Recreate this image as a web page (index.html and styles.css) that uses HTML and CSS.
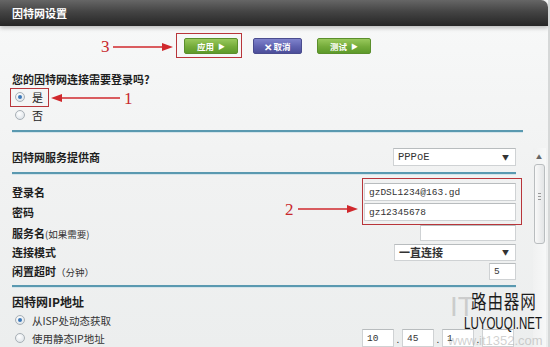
FILE: index.html
```html
<!DOCTYPE html>
<html lang="zh-CN">
<head>
<meta charset="utf-8">
<link rel="stylesheet" href="styles.css">
</head>
<body>
<div class="window">
  <div class="titlebar">因特网设置</div>
  <div class="toolbar">
    <span class="btn green">应用 <span class="tri">▶</span></span>
    <span class="btn purple"><span class="x">✕</span>取消</span>
    <span class="btn green">测试 <span class="tri">▶</span></span>
  </div>
  <div class="form">
    <div class="question">您的因特网连接需要登录吗?</div>
    <div class="radio-row"><span class="radio checked"></span>是</div>
    <div class="radio-row"><span class="radio"></span>否</div>
    <div class="divider wide"></div>
    <div class="panel">
      <div class="panel-body">
        <div class="row isp">
          <span class="label">因特网服务提供商</span>
          <span class="select w-isp"><span class="val mono">PPPoE</span><span class="arrow">▼</span></span>
        </div>
        <div class="divider"></div>
        <div class="row r-login">
          <span class="label">登录名</span>
          <span class="input w-login mono">gzDSL1234@163.gd</span>
        </div>
        <div class="row r-pass">
          <span class="label">密码</span>
          <span class="input w-login mono">gz12345678</span>
        </div>
        <div class="row r-svc">
          <span class="label">服务名<span class="note">(如果需要)</span></span>
          <span class="input w-svc mono"></span>
        </div>
        <div class="row r-mode">
          <span class="label">连接模式</span>
          <span class="select w-mode"><span class="val cjk">一直连接</span><span class="arrow">▼</span></span>
        </div>
        <div class="row r-idle">
          <span class="label">闲置超时<span class="note">（分钟）</span></span>
          <span class="input w-idle mono">5</span>
        </div>
        <div class="divider d3"></div>
        <div class="ip-title">因特网IP地址</div>
        <div class="radio-row sub"><span class="radio checked"></span>从ISP处动态获取</div>
        <div class="row r-static">
          <span class="radio-row sub inline"><span class="radio"></span>使用静态IP地址</span>
          <span class="ip">
            <span class="input w-ip mono">10</span><span class="dot">.</span>
            <span class="input w-ip mono">45</span><span class="dot">.</span>
            <span class="input w-ip mono">1</span><span class="dot">.</span>
            <span class="input w-ip mono"></span>
          </span>
        </div>
      </div>
      <div class="scrollbar">
        <span class="up">▲</span>
        <span class="thumb"><span class="grip"></span></span>
      </div>
    </div>
  </div>

  <div class="mark box3"></div>
  <div class="mark box1"></div>
  <div class="mark box2"></div>
  <span class="num n3">3</span>
  <span class="num n1">1</span>
  <span class="num n2">2</span>
  <svg class="arrows" width="550" height="347" viewBox="0 0 550 347">
    <line x1="113" y1="47" x2="164" y2="47" stroke="#d0282c" stroke-width="1.5"/>
    <polygon points="162,43 173,47 162,51" fill="#d0282c"/>
    <line x1="60" y1="98" x2="120" y2="98" stroke="#d0282c" stroke-width="1.5"/>
    <polygon points="62,94 51,98 62,102" fill="#d0282c"/>
    <line x1="298" y1="209" x2="349" y2="209" stroke="#d0282c" stroke-width="1.5"/>
    <polygon points="347,205 358,209 347,213" fill="#d0282c"/>
  </svg>

  <div class="wm-grey">IT</div>
  <div class="wm-www">www.it1352.com</div>
  <div class="wm-cn">路由器网</div>
  <div class="wm-en">LUYOUQI.NET</div>
</div>
</body>
</html>
```

FILE: styles.css
```css
html, body {
  margin: 0;
  padding: 0;
  background: #ffffff;
}
body {
  width: 550px;
  height: 347px;
  overflow: hidden;
  font-family: "Noto Sans CJK SC", "Liberation Sans", sans-serif;
  color: #1e1e1e;
}
.window {
  position: relative;
  width: 548px;
  height: 347px;
  background: linear-gradient(#f8f9f9, #f1f2f2 50%, #eceeee);
  border-right: 2px solid #d6d8d8;
  overflow: hidden;
}
.titlebar {
  height: 26px;
  line-height: 26px;
  padding-left: 12px;
  color: #ffffff;
  font-size: 11px;
  font-weight: bold;
  background: linear-gradient(#666666, #444444 45%, #262626);
  border-top-right-radius: 7px;
  box-shadow: 0 2px 4px rgba(0,0,0,0.25);
}
.toolbar {
  display: flex;
  gap: 15px;
  padding: 12px 0 0 184px;
  height: 16px;
}
.btn {
  display: flex;
  align-items: center;
  justify-content: center;
  height: 14px;
  border-radius: 2px;
  color: #ffffff;
  font-size: 8.5px;
  font-weight: bold;
  box-sizing: content-box;
}
.btn.green {
  width: 52px;
  background: linear-gradient(#99c95c, #74ab3a 55%, #5e9a2a);
  border: 1px solid #5b8f2c;
}
.btn.purple {
  width: 47px;
  background: linear-gradient(#7f83cc, #5f62b0 55%, #4c4e9a);
  border: 1px solid #4a4c8e;
}
.tri {
  font-size: 7px;
  margin-left: 4px;
}
.x {
  font-size: 10px;
  margin-right: 1px;
}
.form {
  padding: 18px 0 0 12px;
}
.question {
  height: 14px;
  line-height: 14px;
  font-size: 11px;
  font-weight: bold;
  margin-bottom: 2px;
}
.radio-row {
  display: flex;
  align-items: center;
  height: 18px;
  font-size: 11px;
  padding-left: 3px;
}
.radio-row.sub {
  font-size: 10.5px;
  color: #333;
}
.radio-row.inline {
  display: inline-flex;
}
.radio {
  width: 8px;
  height: 8px;
  border-radius: 50%;
  border: 1px solid #a8b0b6;
  background: radial-gradient(circle at 40% 35%, #ffffff, #d6dde3);
  margin-right: 7px;
  position: relative;
}
.radio.checked::after {
  content: "";
  position: absolute;
  left: 2px;
  top: 2px;
  width: 4px;
  height: 4px;
  border-radius: 50%;
  background: #3b78b8;
}
.divider {
  height: 2px;
  background: #5a99b0;
  box-shadow: 0 1px 0 #d4e4ea;
  width: 504px;
  margin-top: 6px;
}
.divider.wide {
  width: 511px;
}
.panel {
  display: flex;
  margin-top: 16px;
}
.panel-body {
  width: 504px;
}
.row {
  display: flex;
  align-items: center;
  justify-content: space-between;
}
.label {
  font-size: 11px;
  font-weight: bold;
  color: #1e1e1e;
}
.note {
  font-weight: normal;
  font-size: 9.5px;
  color: #333;
}
.isp { height: 18px; }
.r-login { height: 18px; margin-top: 9px; }
.r-pass { height: 18px; margin-top: 2px; }
.r-svc { height: 19px; margin-top: 2px; }
.r-mode { height: 18px; margin-top: 1px; }
.r-idle { height: 18px; margin-top: 1px; }
.d3 { margin-top: 5px; }
.ip-title {
  margin-top: 8px;
  height: 14px;
  line-height: 14px;
  font-size: 12px;
  font-weight: bold;
}
.ip-title + .radio-row { margin-top: 2px; }
.r-static { height: 18px; }

.input, .select {
  display: flex;
  align-items: center;
  box-sizing: border-box;
  background: #ffffff;
  border: 1px solid #cfd2d4;
  border-top-color: #b8bcbe;
  padding-left: 4px;
  color: #333;
}
.mono {
  font-family: "Liberation Mono", "DejaVu Sans Mono", monospace;
  font-size: 9.5px;
}
.select .mono { font-size: 10.5px; }
.cjk {
  font-size: 11px;
  font-weight: bold;
}
.select {
  justify-content: space-between;
  padding-right: 6px;
}
.arrow {
  font-size: 7px;
  color: #333;
}
.w-isp { width: 123px; height: 18px; }
.w-login { width: 152px; height: 18px; }
.w-svc { width: 96px; height: 16px; }
.w-mode { width: 122px; height: 17px; }
.w-idle { width: 27px; height: 17px; }
.w-ip { width: 32px; height: 18px; }
.ip {
  display: flex;
  align-items: center;
  margin-right: 2px;
}
.dot {
  width: 8px;
  text-align: center;
  font-size: 10px;
  color: #333;
}
.scrollbar {
  margin-left: 17px;
  width: 13px;
  position: relative;
  height: 199px;
  background: linear-gradient(90deg, #f0f1f1, #f7f8f8);
}
.up {
  position: absolute;
  left: 3px;
  top: 4px;
  font-size: 6px;
  color: #666;
}
.thumb {
  position: absolute;
  left: 1px;
  top: 16px;
  width: 11px;
  height: 80px;
  box-sizing: border-box;
  border: 1px solid #b9bdbf;
  border-radius: 3px;
  background: linear-gradient(90deg, #f9f9f9, #e3e5e6);
}
.grip {
  position: absolute;
  left: 3px;
  top: 28px;
  width: 3px;
  height: 5px;
  border-top: 1px solid #999;
  border-bottom: 1px solid #999;
}
.grip::after {
  content: "";
  position: absolute;
  left: 0;
  top: 2px;
  width: 3px;
  border-top: 1px solid #999;
}

/* annotations overlaid on the screenshot */
.mark {
  position: absolute;
  border: 1.5px solid #b8353a;
  box-sizing: border-box;
}
.box3 { left: 176px; top: 33px; width: 66px; height: 25px; }
.box1 { left: 10px; top: 88px; width: 39px; height: 19px; }
.box2 { left: 362px; top: 178px; width: 160px; height: 47px; }
.num {
  position: absolute;
  font-family: "Liberation Serif", serif;
  font-size: 17px;
  line-height: 17px;
  color: #c8282c;
}
.n3 { left: 101px; top: 38px; }
.n1 { left: 124px; top: 90px; }
.n2 { left: 285px; top: 201px; }
.arrows {
  position: absolute;
  left: 0;
  top: 0;
  pointer-events: none;
}

/* watermark */
.wm-grey {
  position: absolute;
  left: 450px;
  top: 292px;
  font-family: "Liberation Sans", sans-serif;
  font-size: 28px;
  line-height: 30px;
  color: rgba(170,170,170,0.5);
}
.wm-www {
  position: absolute;
  left: 448px;
  top: 334px;
  font-family: "Liberation Sans", sans-serif;
  font-size: 13px;
  line-height: 14px;
  white-space: nowrap;
  color: rgba(170,170,170,0.55);
}
.wm-cn {
  position: absolute;
  left: 471px;
  top: 289px;
  font-size: 19px;
  line-height: 24px;
  letter-spacing: 1px;
  white-space: nowrap;
  color: #1c1c1c;
  transform: scaleX(0.82);
  transform-origin: left top;
}
.wm-en {
  position: absolute;
  left: 464px;
  top: 315px;
  font-family: "Liberation Sans", sans-serif;
  font-size: 16px;
  line-height: 18px;
  white-space: nowrap;
  color: #151515;
  transform: scaleX(0.72);
  transform-origin: left top;
}
```
